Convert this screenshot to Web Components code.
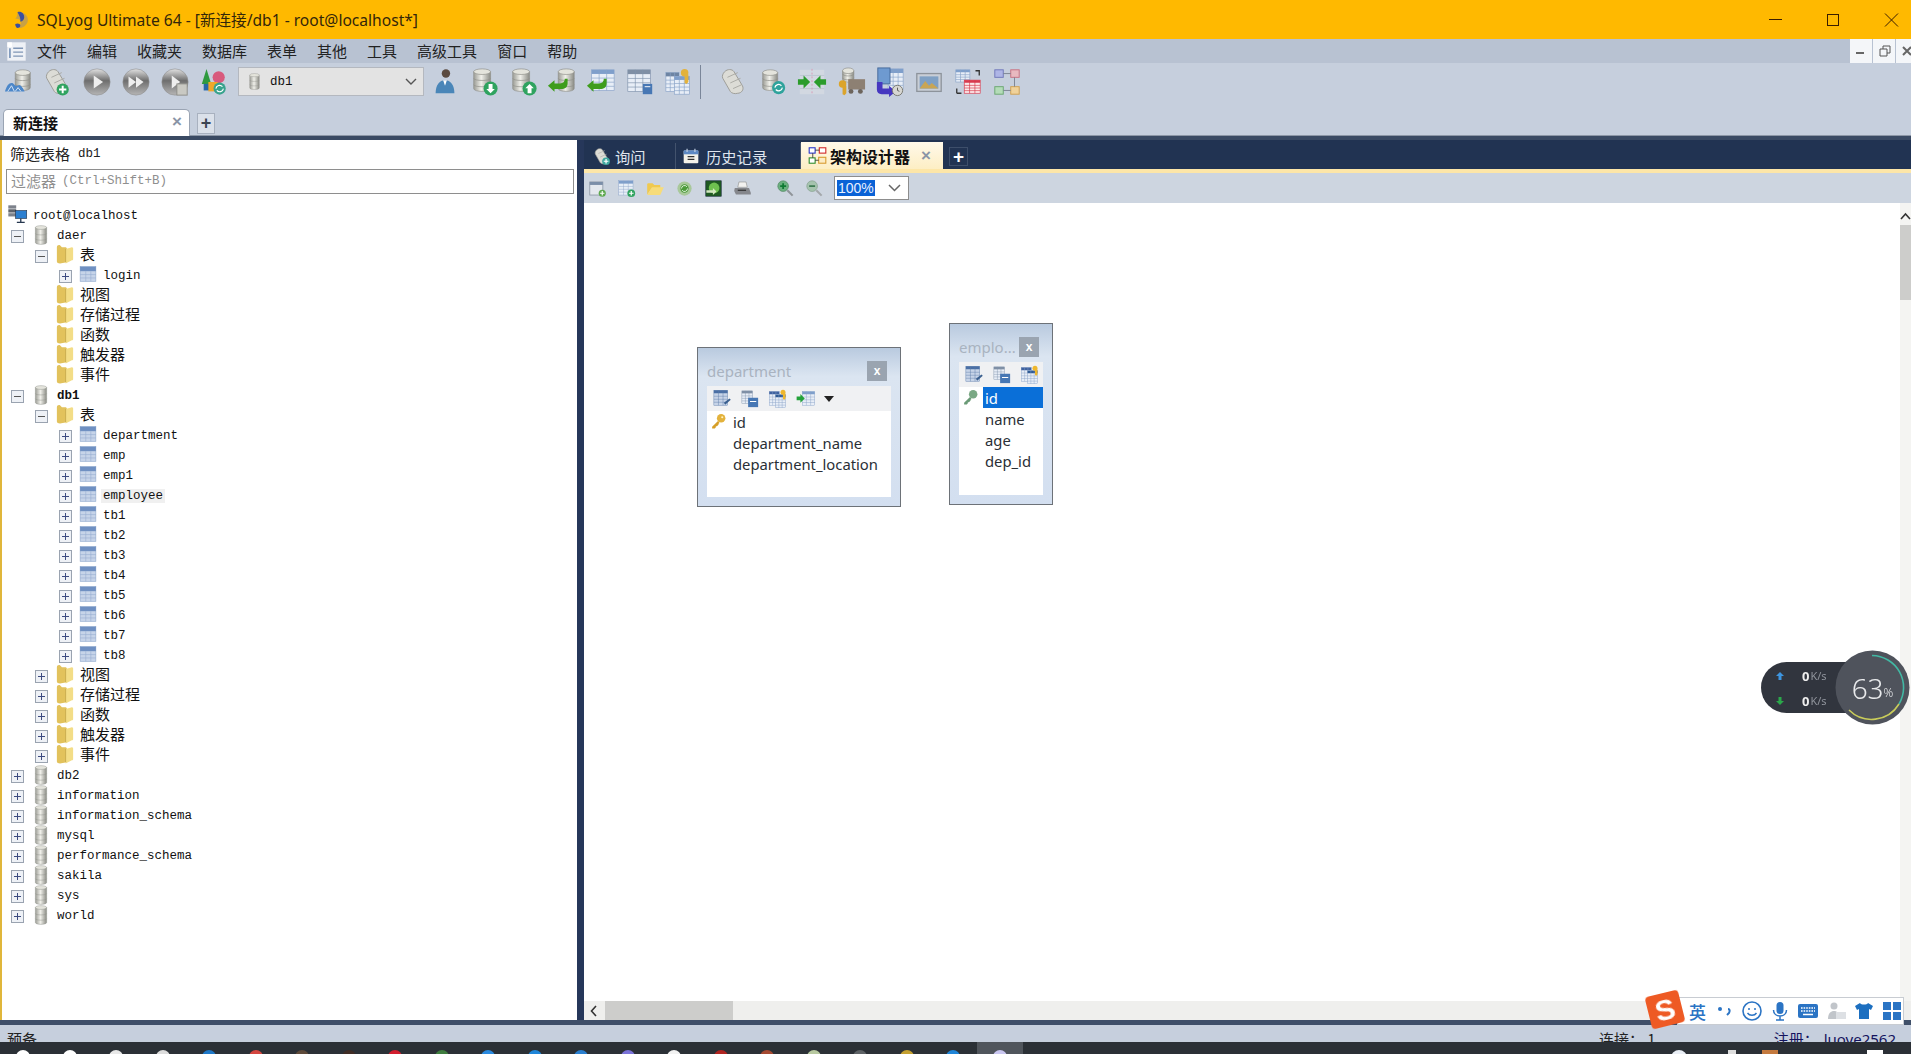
<!DOCTYPE html>
<html lang="zh">
<head>
<meta charset="utf-8">
<title>SQLyog Ultimate 64</title>
<style>
  html, body { margin: 0; height: 100%; overflow: hidden; background: #c6cfdd; }
</style>
</head>
<body>
<sq-app></sq-app>
<script>
// little svg helpers, all icons are drawn on a 32x32 box unless a size is given
const db = (x, y, w, h, c1 = '#e4e4dc', c2 = '#8f9089') => `
  <path d="M${x} ${y+3}v${h-6}c0 4 ${w} 4 ${w} 0v-${h-6}z" fill="url(#g)" stroke="${c2}" stroke-width=".7"/>
  <ellipse cx="${x+w/2}" cy="${y+3}" rx="${w/2}" ry="3" fill="${c1}" stroke="${c2}" stroke-width=".7"/>
  <path d="M${x} ${y+h*.42}c0 3 ${w} 3 ${w} 0M${x} ${y+h*.7}c0 3 ${w} 3 ${w} 0" fill="none" stroke="${c2}" stroke-width=".7"/>`;
const grad = `<defs><linearGradient id="g"><stop offset="0" stop-color="#9b9c95"/><stop offset=".45" stop-color="#f0f0ea"/><stop offset="1" stop-color="#8a8b84"/></linearGradient>
  <linearGradient id="ball" x2="0" y2="1"><stop offset="0" stop-color="#e2e2e2"/><stop offset=".45" stop-color="#6e6e6e"/><stop offset="1" stop-color="#b5b5b5"/></linearGradient></defs>`;
const table = (x, y, w, h, head = '#7f9fcb', line = '#8aa3c8', bg = '#e8eef7') => {
  let s = `<rect x="${x}" y="${y}" width="${w}" height="${h}" fill="${bg}" stroke="${line}" stroke-width=".7"/><rect x="${x}" y="${y}" width="${w}" height="${h*.2}" fill="${head}"/>`;
  for (let i = 1; i < 4; i++) s += `<path d="M${x} ${y+h*.2+i*(h*.8)/4}h${w}" stroke="${line}" stroke-width=".7"/>`;
  for (let i = 1; i < 3; i++) s += `<path d="M${x+i*w/3} ${y}v${h}" stroke="${line}" stroke-width=".7"/>`;
  return s;
};
const badge = (cx, cy, r, c, sign) => {
  const up = `M${cx} ${cy-r*.65}l${r*.6} ${r*.6}h-${r*.32}v${r*.7}h-${r*.56}v-${r*.7}h-${r*.32}z`;
  const down = `M${cx} ${cy+r*.65}l${r*.6} -${r*.6}h-${r*.32}v-${r*.7}h-${r*.56}v${r*.7}h-${r*.32}z`;
  const plus = `M${cx-r*.6} ${cy-r*.16}h${r*.44}v-${r*.44}h${r*.32}v${r*.44}h${r*.44}v${r*.32}h-${r*.44}v${r*.44}h-${r*.32}v-${r*.44}h-${r*.44}z`;
  const d = sign === 'up' ? up : sign === 'down' ? down : plus;
  return `<circle cx="${cx}" cy="${cy}" r="${r}" fill="${c}"/><path d="${d}" fill="#fff"/>`;
};
const ball = inner => `<circle cx="16" cy="16" r="14" fill="url(#ball)" stroke="#8c8c8c" stroke-width=".6"/>${inner}`;
const greenArrow = (x, y, c = '#3f9d1d') => `<path d="M${x} ${y+6}l7 -6v3.500h6c3 0 5 -2 5 -5h3v5c0 4 -3 6 -7 6h-7v3z" fill="${c}"/>`;
const key = (x, y, c = '#e3b23c') => `<circle cx="${x+4}" cy="${y+4}" r="4" fill="${c}"/><path d="M${x+4} ${y+6}v9l2 1 2 -2v-8z" fill="${c}"/>`;
const scroll = `<path d="M6 5c3-3 8-3 10 0l9 15c2 4-1 8-5 8-3 1-7 0-8-2L4 12c-1-2 0-5 2-7z" fill="#dcdcd6" stroke="#9b9b95"/><path d="M9 11l11-5M12 17l11-5M15 23l9-4" stroke="#a9a9a3"/>`;

const ICONS = {
  conn: db(12, 3, 16, 22) + `<path d="M1 26c2-6 4-9 7-9s3 3 5 3 3-2 5 0 3 4 4 6z" fill="#4c87c9"/><path d="M4 26l4-6 3 6M12 26l3-4 3 4" stroke="#dfeaf6" fill="none"/>`,
  newq: scroll + badge(21, 24, 6.5, '#2fa35f', 'plus'),
  play: ball(`<path d="M12.500 9l10 7-10 7z" fill="#eee"/>`),
  ffwd: ball(`<path d="M8 10l8 6-8 6zM16 10l8 6-8 6z" fill="#eee"/>`),
  playdoc: ball(`<path d="M12.500 9l9 7-9 7z" fill="#eee"/>`) + `<rect x="18" y="18" width="11" height="12" fill="#c9c9c3" stroke="#8e8e88"/>`,
  shapes: `<path d="M8 2l5 16H3z" fill="#2e9a3e"/><rect x="5" y="18" width="6" height="7" fill="#2567a8"/><circle cx="21" cy="11" r="6.5" fill="#d85a7d"/><rect x="10" y="16" width="10" height="10" fill="#eea72a"/>` + `<circle cx="22" cy="23" r="6.5" fill="#38a38d"/><path d="M18 23a4 4 0 0 1 7-2M26 23a4 4 0 0 1-7 2" stroke="#fff" stroke-width="1.2" fill="none"/>`,
  user: `<circle cx="17" cy="7" r="4.500" fill="#5b4a3f"/><path d="M6 28c0-9 4-14 10-14s10 5 10 14z" fill="#4a86b8"/><path d="M14 14l2 6 2-6z" fill="#fff"/>`,
  dbdown: db(5, 2, 18, 24) + badge(23, 23, 7.5, '#2fa35f', 'down'),
  dbup: db(5, 2, 18, 24) + badge(23, 23, 7.5, '#2fa35f', 'up'),
  dbback: db(12, 2, 17, 24) + greenArrow(1, 14),
  tblback: table(6, 3, 24, 22) + greenArrow(1, 14),
  tblcalc: table(3, 3, 24, 23, '#7f8fa5', '#8193ad') + `<rect x="19" y="18" width="10" height="11" fill="#4777b4"/><path d="M21 21h6" stroke="#fff"/>`,
  tblkey: table(2, 6, 14, 20, '#6d84a3') + table(11, 10, 16, 19) + key(18, 2),
  scroll: scroll,
  dbsync: db(5, 3, 16, 22) + `<circle cx="22" cy="22" r="7" fill="#2fa39c"/><path d="M18 22a4 4 0 0 1 7-2M26 22a4 4 0 0 1-7 2" stroke="#fff" stroke-width="1.3" fill="none"/>`,
  merge: `<rect x="3" y="3" width="26" height="26" fill="#d2d8e1"/><path d="M3 9h26M3 23h26" stroke="#bcc4d0"/><path d="M16 2v28" stroke="#d79ab5" stroke-dasharray="2 2"/><path d="M1 13h6v-4l7 7-7 7v-4H1z" fill="#2b9c2b"/><path d="M31 13h-6v-4l-7 7 7 7v-4h6z" fill="#2b9c2b"/>`,
  truck: db(7, 1, 12, 15) + key(3, 14, '#dba42c') + `<rect x="13" y="13" width="18" height="11" fill="#8d8073"/><circle cx="16" cy="26" r="2.600" fill="#6d655d"/><circle cx="26" cy="26" r="2.600" fill="#6d655d"/>`,
  tblclock: table(14, 2, 16, 22) + `<rect x="3" y="1" width="13" height="17" fill="#6e9ad0" stroke="#45699b"/>` + `<path d="M2 16v8c0 3 2 5 5 5h8v3l7-6-7-6v3H8v-7z" fill="#4637c0"/><circle cx="24" cy="25" r="5.500" fill="#d7d7d2" stroke="#77776f"/><path d="M24 22v3l2 1" stroke="#555" fill="none"/>`,
  picture: `<rect x="3" y="7" width="26" height="19" fill="#c8ced6" stroke="#8d939b" stroke-width="1.4"/><rect x="6" y="10" width="20" height="13" fill="#7fa0c4"/><path d="M6 23l6-8 4 5 3-3 7 6z" fill="#c9a553"/>`,
  tblred: table(3, 3, 15, 13, '#7f9fcb') + table(12, 14, 17, 14, '#d83a4d', '#d83a4d', '#fbe7e8') + `<path d="M24 4h4v5M4 28v-5M4 28h5" stroke="#333" fill="none" stroke-width="1.4"/>`,
  schema: `<rect x="3" y="3" width="9" height="8" fill="#aeb5e6" stroke="#6e76b9"/><rect x="20" y="3" width="9" height="8" fill="#e8b9c0" stroke="#c76f80"/><rect x="3" y="21" width="9" height="8" fill="#b4dcb8" stroke="#69a56f"/><rect x="20" y="21" width="9" height="8" fill="#f0d29a" stroke="#cf9f4d"/><path d="M12 7h8M24 11v10M12 25h8" stroke="#7b8391"/>`,
  schemaBold: `<rect x="2" y="3" width="10" height="9" fill="#fff" stroke="#2230c8" stroke-width="1.8"/><rect x="19" y="3" width="11" height="9" fill="#fff" stroke="#d02424" stroke-width="1.8"/><rect x="2" y="20" width="10" height="9" fill="#fff" stroke="#2a8a2a" stroke-width="1.8"/><rect x="18" y="19" width="12" height="10" fill="#fdecc4" stroke="#d79a2f" stroke-width="1.8"/><path d="M12 7h7M8 12v8M12 24h6" stroke="#333" stroke-width="1.4"/>`,
  // the tree
  server: `<rect x="2" y="2" width="12" height="5" fill="#7d828b"/><rect x="2" y="8" width="12" height="5" fill="#5e636b"/><rect x="2" y="14" width="12" height="5" fill="#7d828b"/><rect x="13" y="10" width="17" height="12" fill="#2c7fd0" stroke="#26374f"/><path d="M21 22v5M15 28h12" stroke="#26374f" stroke-width="2"/>`,
  db: db(7, 1, 18, 30),
  folder: `<path d="M3 5c0-3 3-4 5-3l3 3h5c2 0 3 1 3 2v22l-11 2c-3 0-5-1-5-3z" fill="#e2c25c"/><path d="M17 8l10-3c1 0 2 1 2 2v17c0 1 0 2-2 2l-10 5z" fill="#f3dd87"/><path d="M17 8v21" stroke="#b89b3d"/>`,
  table: `<rect x="2" y="3" width="28" height="26" fill="#c6d4e9" stroke="#8ba5cb"/><rect x="2" y="3" width="28" height="8" fill="#6f90c2"/><path d="M2 17h28M2 23h28M12 11v18M21 11v18" stroke="#95add0"/>`,
  // schema designer toolbar
  dnew: `<rect x="3" y="5" width="22" height="22" fill="#e4e8ee" stroke="#8c96a5" stroke-width="1.4"/><rect x="3" y="5" width="22" height="5" fill="#7b8ea8"/>` + badge(24, 24, 6, '#5da84e', 'plus'),
  dtable: table(3, 3, 24, 24) + badge(24, 24, 6.5, '#2fa35f', 'plus'),
  dopen: `<path d="M2 26V9c0-1 1-2 2-2h7l3 3h10v5H10z" fill="#f0c94f"/><path d="M10 14h20l-6 13H2z" fill="#f7dc7a"/>`,
  drefresh: `<circle cx="16" cy="16" r="12" fill="#a8c89a"/><circle cx="16" cy="16" r="7" fill="#4c9b3a"/><path d="M11 16a5 5 0 0 1 9-3M21 16a5 5 0 0 1-9 3" stroke="#fff" stroke-width="1.4" fill="none"/>`,
  dimage: `<rect x="3" y="3" width="26" height="26" fill="#1f5a22" stroke="#123"/><circle cx="17" cy="15" r="9" fill="#6ec04f"/><path d="M4 19h11v-4l6 6-6 6v-4H4z" fill="#d4e8c2"/>`,
  dprint: `<path d="M10 5h12l2 9H8z" fill="#f2f2f0" stroke="#8c8c88"/><path d="M3 15h24l3 8v3H5l-3-6z" fill="#85878c"/><path d="M8 19h14" stroke="#333" stroke-width="2"/>`,
  zoomin: `<circle cx="12" cy="12" r="9" fill="#6bb07f" stroke="#50805e"/><path d="M7 10.500h3.500V7h3v3.500H17v3h-3.500V17h-3v-3.500H7z" fill="#0f7a33"/><path d="M19 19l9 9" stroke="#8f9499" stroke-width="3.5"/>`,
  zoomout: `<circle cx="12" cy="12" r="9" fill="#a5c3ae" stroke="#7f9a87"/><path d="M7 10.500h10v3H7z" fill="#3d7a52"/><path d="M19 19l9 9" stroke="#a3a7ab" stroke-width="3.5"/>`,
  // node toolbar
  nedit: table(3, 2, 22, 24, '#4a6fa5', '#5b7cab', '#c7d4e8') + `<path d="M19 22l9-7 2 2-9 8z" fill="#3a5f8f"/>`,
  ncalc: table(3, 3, 17, 20, '#7f8fa5', '#8193ad') + `<rect x="13" y="14" width="16" height="15" fill="#4777b4"/><path d="M16 20h10" stroke="#fff" stroke-width="1.6"/>`,
  nkey: table(2, 4, 16, 22, '#3f62a0') + table(12, 9, 16, 21, '#2f5a94') + key(20, 1, '#eeb72e'),
  nfk: table(10, 4, 20, 22) + `<path d="M1 12h6V8l7 7-7 7v-4H1z" fill="#23a23a"/>`,
  nkeylarge: `<circle cx="21" cy="10" r="8" fill="#e3b23c"/><circle cx="23" cy="8" r="2" fill="#fff3c4"/><path d="M15 15L4 26v3h5l2-2v-2h2l3-3v-2l2-1z" fill="#d69f28"/>`,
  nkeygreen: `<circle cx="21" cy="10" r="8" fill="#7aa884"/><path d="M15 15L4 26v3h5l2-2v-2h2l3-3v-2l2-1z" fill="#6a9a76"/>`,
  // query tabs
  tquery: scroll + badge(22, 24, 6.5, '#3fa8a0', 'plus'),
  thistory: `<rect x="3" y="6" width="26" height="23" rx="2" fill="#f4f2ea"/><rect x="3" y="6" width="26" height="7" fill="#5d89c4"/><path d="M9 3v6M23 3v6" stroke="#c9d6e9" stroke-width="2"/><path d="M10 17h12M10 22h12" stroke="#333" stroke-width="2"/>`,
  // menu bar document icon
  doc: `<rect x="2" y="2" width="28" height="28" fill="#eef1f6"/><rect x="2" y="2" width="7" height="7" fill="#fff"/><path d="M11 11h15M11 17h15M11 23h15" stroke="#7f95b5" stroke-width="2"/><path d="M6 11v15" stroke="#5a7ba8" stroke-width="2"/>`,
  app: `<path d="M8 2c7-2 16 3 18 10 2 8-3 16-12 18-3 1-6 0-7-1 4-2 7-5 7-9 0-5-5-7-10-6 2-3 4-5 4-12z" fill="#c9a143"/><path d="M8 2c7-2 12 3 12 9 0 4-3 7-7 8 1-6-2-12-5-17z" fill="#3a4fa0"/><path d="M4 23c4-2 9-1 9 3 0 2-2 4-6 4-2-2-3-4-3-7z" fill="#3a4fa0"/>`
};

class SqIcon extends HTMLElement {
  connectedCallback() {
    const size = this.getAttribute('size') || 30;
    this.attachShadow({ mode: 'open' });
    this.shadowRoot.innerHTML = `
      <style>:host { display: inline-flex; flex: none; width: ${size}px; height: ${size}px; } svg { width: 100%; height: 100%; display: block; }</style>
      <svg viewBox="0 0 32 32">${grad}${ICONS[this.getAttribute('name')] || ''}</svg>`;
  }
}

class SqTitlebar extends HTMLElement {
  connectedCallback() {
    this.attachShadow({ mode: 'open' });
    this.shadowRoot.innerHTML = `
      <style>
        :host { display: flex; align-items: center; height: 39px; background: #ffb900; color: #33260a; font: 15.6px "Noto Sans", "Noto Sans CJK SC", sans-serif; padding-left: 13px; }
        span { margin-left: 6px; }
        .win { margin-left: auto; margin-right: -9px; display: flex; }
        .win svg { width: 58px; height: 39px; display: block; }
      </style>
      <sq-icon name="app" size="18"></sq-icon>
      <span>SQLyog Ultimate 64 - [新连接/db1 - root@localhost*]</span>
      <div class="win">
        <svg viewBox="0 0 58 39"><path d="M23 19.500h13" stroke="#3a1d00"/></svg>
        <svg viewBox="0 0 58 39"><rect x="23.500" y="14.500" width="11" height="11" fill="none" stroke="#3a1d00"/></svg>
        <svg viewBox="0 0 58 39"><path d="M23 13.500l13 13M36 13.500l-13 13" stroke="#3a1d00"/></svg>
      </div>`;
  }
}

class SqMenubar extends HTMLElement {
  connectedCallback() {
    const items = ['文件', '编辑', '收藏夹', '数据库', '表单', '其他', '工具', '高级工具', '窗口', '帮助'];
    this.attachShadow({ mode: 'open' });
    this.shadowRoot.innerHTML = `
      <style>
        :host { display: flex; align-items: center; height: 24px; background: #b8c2d2; font: 15px "Noto Sans CJK SC", sans-serif; color: #222; padding-left: 6px; }
        nav { display: flex; gap: 20px; margin-left: 10px; padding-bottom: 2px; }
        .mdi { margin-left: auto; display: flex; height: 100%; gap: 1px; width: 61px; overflow: hidden; }
        .mdi svg { width: 22px; height: 24px; flex: none; background: #f4f6f9; }
      </style>
      <sq-icon name="doc" size="21"></sq-icon>
      <nav>${items.map(t => `<span>${t}</span>`).join('')}</nav>
      <div class="mdi">
        <svg viewBox="0 0 22 24"><path d="M6 14h8" stroke="#666" stroke-width="2"/></svg>
        <svg viewBox="0 0 22 24"><path d="M7 10h7v7H7zM10 10V7h7v7h-3" fill="none" stroke="#555"/></svg>
        <svg viewBox="0 0 22 24"><path d="M7 8l8 8M15 8l-8 8" stroke="#666" stroke-width="2"/></svg>
      </div>`;
  }
}

class SqToolbar extends HTMLElement {
  connectedCallback() {
    const a = ['conn', 'newq', 'play', 'ffwd', 'playdoc', 'shapes'];
    const b = ['user', 'dbdown', 'dbup', 'dbback', 'tblback', 'tblcalc', 'tblkey'];
    const c = ['scroll', 'dbsync', 'merge', 'truck', 'tblclock', 'picture', 'tblred', 'schema'];
    const row = l => l.map(n => `<sq-icon name="${n}"></sq-icon>`).join('');
    this.attachShadow({ mode: 'open' });
    this.shadowRoot.innerHTML = `
      <style>
        :host { display: flex; align-items: flex-start; height: 45px; background: #c6cfdd; padding: 4px 0 0 4px; box-sizing: border-box; gap: 9px; }
        .combo { display: flex; align-items: center; width: 186px; height: 29px; box-sizing: border-box; margin-right: -3px; background: #e3e3e3; border: 1px solid #b4b8bf; font: 12.5px "Liberation Mono", monospace; color: #111; padding-left: 7px; gap: 7px; }
        .combo svg { margin-left: auto; margin-right: 6px; }
        .sep { width: 1px; height: 34px; background: #7a8699; margin: -2px 9px 0 -3px; }
      </style>
      ${row(a)}
      <div class="combo"><sq-icon name="db" size="17"></sq-icon>db1<svg width="12" height="8" viewBox="0 0 12 8"><path d="M1 1l5 5 5-5" fill="none" stroke="#555" stroke-width="1.4"/></svg></div>
      ${row(b)}
      <div class="sep"></div>
      ${row(c)}`;
  }
}

class SqConnTabs extends HTMLElement {
  connectedCallback() {
    this.attachShadow({ mode: 'open' });
    this.shadowRoot.innerHTML = `
      <style>
        :host { display: flex; align-items: flex-end; height: 28px; box-sizing: border-box; background: #c6cfdd; padding-left: 3px; border-bottom: 1px solid #8d97a6; gap: 7px; }
        .tab { width: 187px; height: 27px; box-sizing: border-box; margin-bottom: -1px; background: #fff; border: 1px solid #9aa4b3; border-bottom: 0; border-radius: 5px 5px 0 0; display: flex; align-items: center; padding: 0 7px 2px 9px; font: bold 15px "Noto Sans CJK SC", sans-serif; color: #111; justify-content: space-between; }
        .x { color: #8a95a6; font: bold 17px "Liberation Sans", sans-serif; }
        .add { width: 18px; height: 21px; margin-bottom: 1px; box-sizing: border-box; border: 1px solid #a8b1bf; background: #dbe1ea; color: #3c4654; display: flex; align-items: center; justify-content: center; font: bold 18px "Liberation Sans", sans-serif; }
      </style>
      <div class="tab"><span>新连接</span><span class="x">×</span></div>
      <div class="add">+</div>`;
  }
}

class SqTreeRow extends HTMLElement {
  connectedCallback() {
    const level = +this.getAttribute('level');
    const exp = this.getAttribute('exp');
    const icon = this.getAttribute('icon');
    const sign = exp === 'plus'
      ? '<path d="M3 6.500h7M6.500 3v7" stroke="#3b4a80"/>'
      : exp === 'minus' ? '<path d="M3 6.500h7" stroke="#555"/>' : '';
    // icons do not sit on the row's middle line in the original
    const lift = { table: 5, folder: 4, db: 2 }[icon];
    this.attachShadow({ mode: 'open' });
    this.shadowRoot.innerHTML = `
      <style>
        :host { display: flex; align-items: center; height: 20px; padding-left: ${9 + 24 * (level - 1)}px; font: 12.5px "Liberation Mono", "Noto Sans CJK SC", monospace; color: #111; white-space: nowrap; }
        :host([cn]) { font: 15px "Noto Sans CJK SC", sans-serif; }
        :host([cn]) span { padding-bottom: 5px; margin-left: -3px; }
        :host([bold]) { font-weight: bold; }
        svg.e { flex: none; width: 13px; height: 13px; margin-right: 8px; }
        sq-icon { margin: 0 6px ${lift}px -1px; }
        span { padding: 0 2px; margin-left: -2px; }
        :host([sel]) span { background: #f0f0f0; }
      </style>
      <svg class="e" viewBox="0 0 13 13">${exp ? `<rect x=".5" y=".5" width="12" height="12" fill="#eef1f6" stroke="#9aa3b0"/>${sign}` : ''}</svg>
      <sq-icon name="${icon}" size="${icon === 'table' ? 18 : 20}"></sq-icon>
      <span><slot></slot></span>`;
  }
}

class SqSidebar extends HTMLElement {
  connectedCallback() {
    const folders = ['视图', '存储过程', '函数', '触发器', '事件'];
    const rows = [];
    const r = (level, exp, icon, text, extra = '') => rows.push(`<sq-tree-row level="${level}" exp="${exp}" icon="${icon}" ${extra}>${text}</sq-tree-row>`);
    r(1, 'minus', 'db', 'daer');
    r(2, 'minus', 'folder', '表', 'cn');
    r(3, 'plus', 'table', 'login');
    folders.forEach(f => r(2, '', 'folder', f, 'cn'));
    r(1, 'minus', 'db', 'db1', 'bold');
    r(2, 'minus', 'folder', '表', 'cn');
    ['department', 'emp', 'emp1', 'employee', 'tb1', 'tb2', 'tb3', 'tb4', 'tb5', 'tb6', 'tb7', 'tb8']
      .forEach(t => r(3, 'plus', 'table', t, t === 'employee' ? 'sel' : ''));
    folders.forEach(f => r(2, 'plus', 'folder', f, 'cn'));
    ['db2', 'information', 'information_schema', 'mysql', 'performance_schema', 'sakila', 'sys', 'world']
      .forEach(d => r(1, 'plus', 'db', d));
    this.attachShadow({ mode: 'open' });
    this.shadowRoot.innerHTML = `
      <style>
        :host { display: flex; flex-direction: column; width: 577px; flex: none; box-sizing: border-box; background: #fff; border-left: 2px solid #e0b63a; overflow: hidden; }
        .head { height: 29px; box-sizing: border-box; padding-bottom: 2px; flex: none; display: flex; align-items: center; padding-left: 8px; gap: 8px; font: 15px "Noto Sans CJK SC", sans-serif; color: #222; }
        .head i { font: 12.5px "Liberation Mono", monospace; }
        .filter { height: 25px; box-sizing: border-box; margin: 0 3px 0 4px; border: 1px solid #8e8e8e; display: flex; align-items: center; padding: 0 0 2px 4px; color: #8f8f8f; font: 15px "Noto Sans CJK SC", sans-serif; gap: 6px; flex: none; }
        .filter i { font: normal 12.5px "Liberation Mono", monospace; }
        .root { display: flex; align-items: center; height: 20px; margin-top: 12px; padding-left: 5px; font: 12.5px "Liberation Mono", monospace; color: #111; gap: 5px; flex: none; }
        .root sq-icon { margin-bottom: 4px; }
      </style>
      <div class="head"><span>筛选表格</span><i style="font-style:normal">db1</i></div>
      <div class="filter"><span>过滤器</span><i>(Ctrl+Shift+B)</i></div>
      <div class="root"><sq-icon name="server" size="21"></sq-icon>root@localhost</div>
      ${rows.join('')}`;
  }
}

class SqQueryTabs extends HTMLElement {
  connectedCallback() {
    this.attachShadow({ mode: 'open' });
    this.shadowRoot.innerHTML = `
      <style>
        :host { display: flex; align-items: flex-end; height: 33px; box-sizing: border-box; background: #213352; border-bottom: 4px solid #fde6a8; padding-left: 1px; font: 15.3px "Noto Sans CJK SC", sans-serif; color: #dfe5ee; flex: none; }
        .t { height: 26px; display: flex; align-items: center; gap: 3px; box-sizing: border-box; padding-left: 8px; border-right: 1px solid #43536d; }
        .on { background: linear-gradient(#fff9ea, #fdeec4); color: #111; font-weight: bold; font-size: 16px; border: 0; height: 27px; padding: 0 6px 0 7px; }
        .x { color: #8a95a6; font: bold 17px "Liberation Sans", sans-serif; margin-left: 8px; }
        .add { width: 19px; height: 19px; margin: 0 0 3px 6px; box-sizing: border-box; border: 1px solid #3d4e6a; color: #fff; display: flex; align-items: center; justify-content: center; font: bold 19px "Liberation Sans", sans-serif; }
      </style>
      <div class="t" style="width:91px"><sq-icon name="tquery" size="19"></sq-icon>询问</div>
      <div class="t" style="width:125px;padding-left:6px;gap:6px"><sq-icon name="thistory" size="18"></sq-icon>历史记录</div>
      <div class="t on" style="width:142px"><sq-icon name="schemaBold" size="19"></sq-icon>架构设计器<span class="x">×</span></div>
      <div class="add">+</div>`;
  }
}

class SqSchemaBar extends HTMLElement {
  connectedCallback() {
    const names = ['dnew', 'dtable', 'dopen', 'drefresh', 'dimage', 'dprint'];
    this.attachShadow({ mode: 'open' });
    this.shadowRoot.innerHTML = `
      <style>
        :host { display: flex; align-items: center; height: 30px; background: #cdd5e0; padding-left: 4px; gap: 10px; flex: none; }
        .z { margin-left: 14px; }
        .combo { width: 75px; height: 24px; box-sizing: border-box; background: #fff; border: 1px solid #8d8d8d; display: flex; align-items: center; justify-content: space-between; padding: 0 7px 0 2px; font: 14px "Liberation Sans", sans-serif; }
        .combo b { font-weight: normal; background: #0a62d6; color: #e8f0ff; padding: 0 1px; }
      </style>
      ${names.map(n => `<sq-icon name="${n}" size="19"></sq-icon>`).join('')}
      <sq-icon class="z" name="zoomin" size="19"></sq-icon>
      <sq-icon name="zoomout" size="19"></sq-icon>
      <div class="combo"><b>100%</b><svg width="13" height="8" viewBox="0 0 13 8"><path d="M1 1l5.500 5.500L12 1" fill="none" stroke="#666" stroke-width="1.5"/></svg></div>`;
  }
}

// table node on the schema canvas, x/y/w/h come from attributes
class SqNode extends HTMLElement {
  connectedCallback() {
    const at = n => this.getAttribute(n);
    const tools = at('tools').split(',').map(n => `<sq-icon name="${n}" size="20"></sq-icon>`).join('');
    this.attachShadow({ mode: 'open' });
    this.shadowRoot.innerHTML = `
      <style>
        :host { position: absolute; left: ${at('x')}px; top: ${at('y')}px; width: ${at('w')}px; height: ${at('h')}px; box-sizing: border-box; border: 1px solid #6d7278; background: linear-gradient(#b9cadf, #dbe5f1 18%, #d3dff0); padding: 0 9px 9px; display: flex; flex-direction: column; font: 14.8px "Noto Sans", sans-serif; color: #2a2f36; }
        .title { flex: none; display: flex; align-items: center; height: ${at('head')}px; box-sizing: border-box; padding: 8px 0 0 0; justify-content: space-between; color: #a9b3c0; font-size: 15px; margin-right: 4px; white-space: nowrap; }
        .title b { width: 20px; height: 20px; background: #9aa4b0; color: #fff; font: bold 12px "Liberation Sans", sans-serif; display: flex; align-items: center; justify-content: center; flex: none; }
        .body { flex: 1; background: #fff; }
        .tools { display: flex; height: 25px; align-items: center; background: #f0f1f3; gap: 8px; padding-left: 5px; }
      </style>
      <div class="title"><span>${at('name')}</span><b>x</b></div>
      <div class="body">
        <div class="tools">${tools}<slot name="tools"></slot></div>
        <slot></slot>
      </div>`;
  }
}

class SqField extends HTMLElement {
  connectedCallback() {
    const icon = this.getAttribute('icon');
    this.attachShadow({ mode: 'open' });
    this.shadowRoot.innerHTML = `
      <style>
        :host { display: flex; align-items: center; height: 21px; padding-left: 3px; white-space: nowrap; }
        .k { width: 21px; flex: none; display: flex; }
        .t { flex: 1; padding-left: 2px; height: 100%; display: flex; align-items: center; }
        :host([sel]) .t { background: #0a6fd8; color: #fff; }
      </style>
      <span class="k">${icon ? `<sq-icon name="${icon}" size="17"></sq-icon>` : ''}</span>
      <span class="t"><slot></slot></span>`;
  }
}

class SqCanvas extends HTMLElement {
  connectedCallback() {
    this.attachShadow({ mode: 'open' });
    this.shadowRoot.innerHTML = `
      <style>
        :host { display: block; position: relative; flex: 1; background: #fff; overflow: hidden; }
        .vbar { position: absolute; top: 0; right: 0; bottom: 0; width: 11px; background: #f4f4f2; display: flex; flex-direction: column; align-items: center; }
        .vbar svg { margin-top: 9px; flex: none; }
        .vbar i { display: block; width: 100%; height: 75px; margin-top: 5px; background: #cdcdcb; }
        .hbar { position: absolute; left: 0; right: 0; bottom: 0; height: 19px; background: #efefed; display: flex; align-items: center; padding-left: 6px; }
        .hbar i { display: block; width: 128px; height: 100%; margin-left: 8px; background: #cdcdcb; }
      </style>
      <slot></slot>
      <div class="vbar"><svg width="11" height="8" viewBox="0 0 11 8"><path d="M1 7l4.500-5L10 7" fill="none" stroke="#333" stroke-width="1.6"/></svg><i></i></div>
      <div class="hbar"><svg width="7" height="12" viewBox="0 0 7 12"><path d="M6 1L1.500 6 6 11" fill="none" stroke="#333" stroke-width="1.6"/></svg><i></i></div>`;
  }
}

// the net speed floater
class SqSpeed extends HTMLElement {
  connectedCallback() {
    this.attachShadow({ mode: 'open' });
    this.shadowRoot.innerHTML = `
      <style>
        :host { position: fixed; left: 1761px; top: 650px; width: 149px; height: 75px; display: block; font-family: "Noto Sans", sans-serif; }
        .pill { position: absolute; left: 0; top: 12px; width: 110px; height: 51px; border-radius: 26px; background: #31353e; color: #c5c8ce; display: flex; flex-direction: column; justify-content: space-around; padding: 1px 0 0; box-sizing: border-box; }
        .pill div { display: flex; align-items: center; font-size: 11px; padding-left: 14px; }
        .pill b { color: #eee; font-size: 13px; margin-left: 17px; margin-right: 1px; }
        .pill small { font-size: 11px; color: #8f939b; }
        .c { position: absolute; left: 74px; top: 0; width: 75px; height: 75px; }
        .n { position: absolute; left: 74px; top: 0; width: 75px; height: 75px; display: flex; align-items: center; justify-content: center; color: #e9eaec; font-size: 28px; font-weight: 300; }
        .n small { font-size: 12px; margin-top: 10px; }
      </style>
      <div class="pill">
        <div><svg width="10" height="10" viewBox="0 0 10 10"><path d="M5 1l4 4H6.500v4h-3V5H1z" fill="#3d95e0"/></svg><b>0</b><small>K/s</small></div>
        <div><svg width="10" height="10" viewBox="0 0 10 10"><path d="M5 9L1 5h2.500V1h3v4H9z" fill="#2ba84a"/></svg><b>0</b><small>K/s</small></div>
      </div>
      <svg class="c" viewBox="0 0 75 75">
        <circle cx="37.5" cy="37.5" r="37" fill="#4f535c"/>
        <path d="M37 5.500A32 32 0 0 1 64 54" fill="none" stroke="#42b8a4" stroke-width="1.6"/>
        <path d="M64 54A32 32 0 0 1 14 60" fill="none" stroke="#c9cc5a" stroke-width="1.6"/>
      </svg>
      <div class="n">63<small>%</small></div>`;
  }
}

// sogou input method bar, floats over the status bar
class SqIme extends HTMLElement {
  connectedCallback() {
    this.attachShadow({ mode: 'open' });
    this.shadowRoot.innerHTML = `
      <style>
        :host { position: fixed; left: 1648px; top: 993px; width: 256px; height: 34px; display: block; }
        .bar { position: absolute; left: 29px; top: 4px; right: 0; height: 28px; box-sizing: border-box; background: #fff; border: 1px solid #c8ccd2; display: flex; align-items: center; gap: 8px; padding-left: 11px; color: #2b74c4; font: 500 17px "Noto Sans CJK SC", sans-serif; }
        .bar svg { width: 20px; height: 20px; flex: none; }
        .logo { position: absolute; left: 0; top: 0; width: 34px; height: 33px; background: #ee5a24; border-radius: 4px; transform: rotate(-14deg); color: #fff; display: flex; align-items: center; justify-content: center; font: bold 30px "Liberation Sans", sans-serif; }
      </style>
      <div class="bar">
        <span>英</span>
        <svg viewBox="0 0 20 20"><circle cx="6" cy="8" r="2" fill="#2b74c4"/><path d="M14 8c2 0 2 2 1 4l-2 2" fill="none" stroke="#2b74c4" stroke-width="2"/></svg>
        <svg viewBox="0 0 20 20"><circle cx="10" cy="10" r="9" fill="none" stroke="#2b74c4" stroke-width="1.6"/><circle cx="7" cy="8" r="1" fill="#2b74c4"/><circle cx="13" cy="8" r="1" fill="#2b74c4"/><path d="M5.500 12c2 3 7 3 9 0" fill="none" stroke="#2b74c4" stroke-width="1.4"/></svg>
        <svg viewBox="0 0 20 20"><rect x="6.5" y="1" width="7" height="12" rx="3.5" fill="#2b74c4"/><path d="M3.500 9c0 8 13 8 13 0M10 15v4M6 19h8" fill="none" stroke="#2b74c4" stroke-width="1.5"/></svg>
        <svg viewBox="0 0 20 20"><rect x="0" y="3" width="20" height="14" rx="2" fill="#2b74c4"/><path d="M3 7h14M3 10h14" stroke="#fff" stroke-dasharray="1.6 1" stroke-width="1.5"/><path d="M5 13.500h10" stroke="#fff" stroke-width="1.5"/></svg>
        <svg viewBox="0 0 20 20"><circle cx="8" cy="5" r="3.5" fill="#c1c5ca"/><path d="M2 18c0-6 3-8 6-8s6 2 6 8z" fill="#c1c5ca"/><rect x="10" y="11" width="10" height="7" fill="#dde0e4"/></svg>
        <svg viewBox="0 0 20 20"><path d="M6 2L1 5l2 4 2-1v10h10V8l2 1 2-4-5-3c-1 2-7 2-8 0z" fill="#1c6fc0"/></svg>
        <svg viewBox="0 0 20 20"><rect x="1" y="1" width="8" height="8" fill="#2b74c4"/><rect x="11" y="1" width="8" height="8" fill="#2b74c4"/><rect x="1" y="11" width="8" height="8" fill="#2b74c4"/><rect x="11" y="11" width="8" height="8" fill="#2b74c4"/></svg>
      </div>
      <div class="logo">S</div>`;
  }
}

class SqStatus extends HTMLElement {
  connectedCallback() {
    this.attachShadow({ mode: 'open' });
    this.shadowRoot.innerHTML = `
      <style>
        :host { display: flex; flex: none; height: 17px; overflow: hidden; background: #c6cfdd; font: 15px/18px "Noto Sans CJK SC", sans-serif; color: #222; padding: 5px 15px 0 7px; box-sizing: border-box; }
        .c { margin-left: auto; }
        .r { margin-left: 118px; color: #14145e; }
        .r i { font-style: normal; font-family: "Noto Sans", sans-serif; margin-left: 5px; }
      </style>
      <span>预备</span><span class="c">连接： 1</span><span class="r">注册：<i>luoye2562</i></span>`;
  }
}

class SqTaskbar extends HTMLElement {
  connectedCallback() {
    const colors = ['#fff', '#fff', '#e8e8e8', '#ddd', '#1e78c8', '#d4463f', '#5e4a3a', '#3f2c25', '#d21e2e', '#3f7d3f', '#2a8ae0', '#1f85d8', '#2a7fd0', '#7a72d8', '#f2f2f2', '#b02420', '#a54a32', '#b8c9a0', '#5e6266', '#c4a030', '#1f85d8', '#c9c6f0'];
    this.attachShadow({ mode: 'open' });
    this.shadowRoot.innerHTML = `
      <style>
        :host { display: flex; flex: none; height: 12px; background: #2b3036; overflow: hidden; }
        .i { width: 46.5px; flex: none; display: flex; justify-content: center; box-sizing: border-box; padding-top: 8px; }
        .i:first-child { margin-left: -9px; }
        .i u { display: block; width: 14px; height: 8px; border-radius: 7px 7px 0 0; }
        .on { background: #50555c; }
        .tray { margin-left: 648px; display: flex; padding-top: 8px; }
        .tray u { display: block; width: 16px; height: 8px; flex: none; }
      </style>
      ${colors.map((c, i) => `<div class="i ${i === 21 ? 'on' : ''}"><u style="background:${c}"></u></div>`).join('')}
      <div class="tray">
        <u style="background:#e9eef5;border-radius:8px 8px 0 0"></u>
        <u style="background:#ddd;width:8px;margin-left:41px"></u>
        <u style="background:#c47a3e;margin-left:26px"></u>
        <u style="background:#fff;margin-left:89px"></u>
      </div>`;
  }
}

class SqApp extends HTMLElement {
  connectedCallback() {
    this.attachShadow({ mode: 'open' });
    this.shadowRoot.innerHTML = `
      <style>
        :host { display: flex; flex-direction: column; height: 1054px; overflow: hidden; }
        .main { flex: 1; min-height: 0; display: flex; border-top: 4px solid #3a4a63; border-bottom: 5px solid #3f4f69; background: #26375a; }
        .right { flex: 1; min-width: 0; margin-left: 7px; display: flex; flex-direction: column; }
      </style>
      <sq-titlebar></sq-titlebar>
      <sq-menubar></sq-menubar>
      <sq-toolbar></sq-toolbar>
      <sq-conn-tabs></sq-conn-tabs>
      <div class="main">
        <sq-sidebar></sq-sidebar>
        <div class="right">
          <sq-query-tabs></sq-query-tabs>
          <sq-schema-bar></sq-schema-bar>
          <sq-canvas>
            <sq-node name="department" x="113" y="144" w="204" h="160" head="38" tools="nedit,ncalc,nkey,nfk">
              <svg slot="tools" width="10" height="6" viewBox="0 0 10 6"><path d="M0 0h10L5 6z" fill="#222"/></svg>
              <sq-field icon="nkeylarge">id</sq-field>
              <sq-field>department_name</sq-field>
              <sq-field>department_location</sq-field>
            </sq-node>
            <sq-node name="emplo..." x="365" y="120" w="104" h="182" head="38" tools="nedit,ncalc,nkey">
              <sq-field icon="nkeygreen" sel>id</sq-field>
              <sq-field>name</sq-field>
              <sq-field>age</sq-field>
              <sq-field>dep_id</sq-field>
            </sq-node>
          </sq-canvas>
        </div>
      </div>
      <sq-status></sq-status>
      <sq-taskbar></sq-taskbar>
      <sq-speed></sq-speed>
      <sq-ime></sq-ime>`;
  }
}

customElements.define('sq-icon', SqIcon);
customElements.define('sq-titlebar', SqTitlebar);
customElements.define('sq-menubar', SqMenubar);
customElements.define('sq-toolbar', SqToolbar);
customElements.define('sq-conn-tabs', SqConnTabs);
customElements.define('sq-tree-row', SqTreeRow);
customElements.define('sq-sidebar', SqSidebar);
customElements.define('sq-query-tabs', SqQueryTabs);
customElements.define('sq-schema-bar', SqSchemaBar);
customElements.define('sq-node', SqNode);
customElements.define('sq-field', SqField);
customElements.define('sq-canvas', SqCanvas);
customElements.define('sq-speed', SqSpeed);
customElements.define('sq-ime', SqIme);
customElements.define('sq-status', SqStatus);
customElements.define('sq-taskbar', SqTaskbar);
customElements.define('sq-app', SqApp);
</script>
</body>
</html>
